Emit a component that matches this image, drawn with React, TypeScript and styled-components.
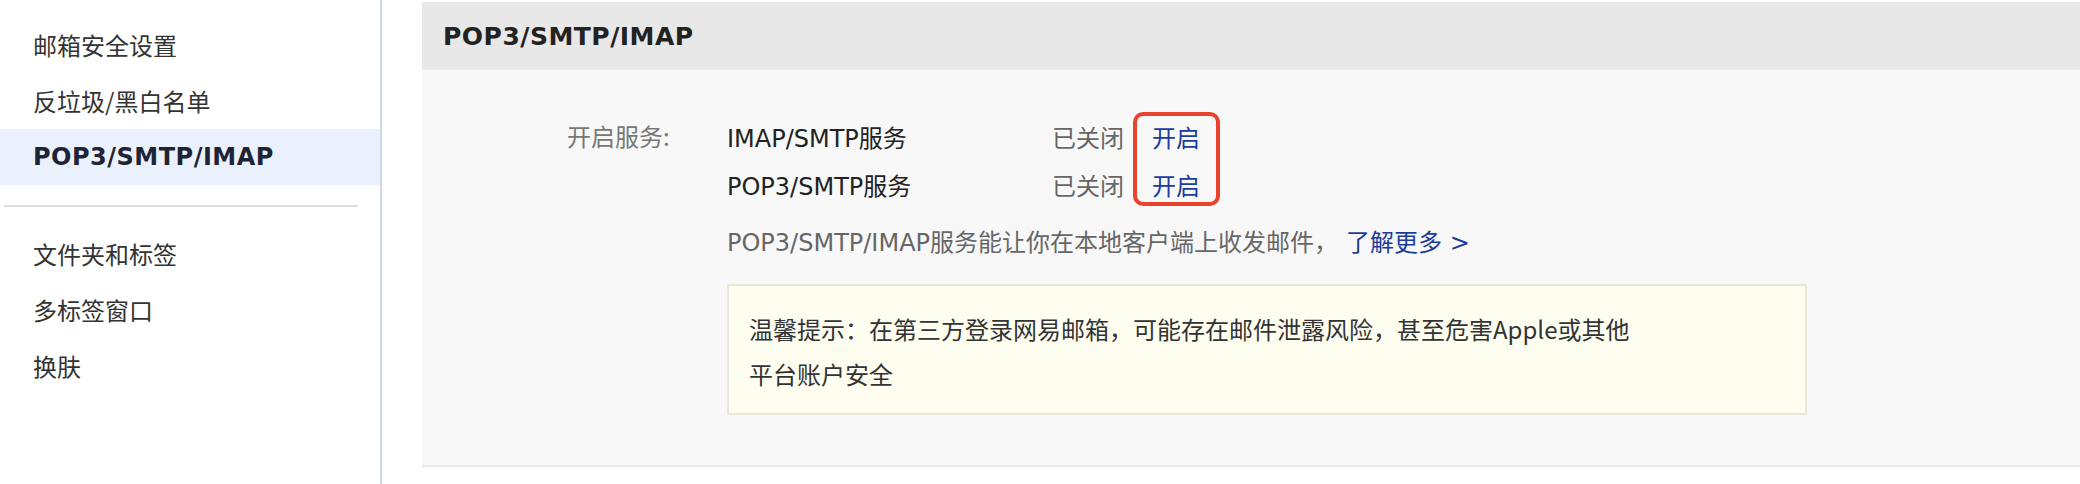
import React from "react";
import styled, { createGlobalStyle } from "styled-components";

const GlobalStyle = createGlobalStyle`
  html, body {
    margin: 0;
    padding: 0;
    background: #ffffff;
  }
  body {
    font-family: "DejaVu Sans", "Noto Sans CJK SC", sans-serif;
    font-size: 24px;
    color: #333333;
  }
`;

const Page = styled.div`
  display: flex;
  min-height: 484px;
`;

const Sidebar = styled.nav`
  width: 380px;
  flex: 0 0 380px;
  border-right: 2px solid #cbd7f3;
  padding-top: 17px;
  box-sizing: content-box;
`;

const NavItem = styled.div<{ $active?: boolean }>`
  height: 56px;
  line-height: 56px;
  padding-left: 33px;
  font-size: 24px;
  font-family: ${(p) =>
    p.$active
      ? `"DejaVu Sans", "Noto Sans CJK SC", sans-serif`
      : `"Noto Sans CJK SC", sans-serif`};
  font-weight: ${(p) => (p.$active ? 700 : 400)};
  letter-spacing: ${(p) => (p.$active ? "0.5px" : "0")};
  color: ${(p) => (p.$active ? "#1e2434" : "#333333")};
  background: ${(p) => (p.$active ? "#eaf1fd" : "transparent")};
  cursor: pointer;
`;

const NavDivider = styled.hr`
  margin: 20px 22px 19px 4px;
  border: 0;
  height: 2px;
  background: #dedede;
`;

const Main = styled.main`
  flex: 1;
  padding: 2px 0 0 40px;
`;

const Panel = styled.section`
  background: #f8f8f8;
  border-bottom: 2px solid #e8e8e8;
`;

const PanelHeader = styled.header`
  height: 68px;
  display: flex;
  align-items: center;
  padding-left: 21px;
  background: #e8e8e8;
`;

const PanelTitle = styled.h2`
  margin: 0;
  font-family: "DejaVu Sans", sans-serif;
  font-size: 25px;
  font-weight: 700;
  letter-spacing: 0.5px;
  color: #222222;
`;

const PanelBody = styled.div`
  display: grid;
  grid-template-columns: 305px 1fr;
  padding: 42px 0 50px;
`;

const FieldLabel = styled.div`
  padding-left: 145px;
  line-height: 42px;
  margin-top: 3px;
  color: #777777;
  font-family: "Noto Sans CJK SC", sans-serif;
`;

const FieldContent = styled.div`
  display: flex;
  flex-direction: column;
  align-items: flex-start;
`;

const ServiceList = styled.div`
  position: relative;
  display: grid;
  grid-template-columns: 325px 100px auto;
  grid-auto-rows: 48px;
  align-items: center;
`;

const ServiceName = styled.span`
  color: #222222;
`;

const ServiceStatus = styled.span`
  color: #666666;
  font-family: "Noto Sans CJK SC", sans-serif;
`;

const Link = styled.a`
  color: #1c3c9c;
  text-decoration: none;
  font-family: "Noto Sans CJK SC", sans-serif;
  cursor: pointer;
`;

const Highlight = styled.div`
  position: absolute;
  left: 406px;
  top: 0;
  width: 87px;
  height: 94px;
  box-sizing: border-box;
  border: 4px solid #e8432c;
  border-radius: 10px;
  pointer-events: none;
`;

const Description = styled.p`
  margin: 11px 0 0;
  line-height: 48px;
  color: #666666;
`;

const MoreLink = styled(Link)`
  margin-left: 8px;
  font-family: "DejaVu Sans", "Noto Sans CJK SC", sans-serif;
`;

const Notice = styled.div`
  margin-top: 17px;
  width: 1080px;
  box-sizing: border-box;
  padding: 20px 20px 17px;
  border: 2px solid #e8e8d2;
  background: #fdfdf0;
  font-family: "Noto Sans CJK SC", sans-serif;
  line-height: 45px;
  color: #333333;
`;

const topNav = ["邮箱安全设置", "反垃圾/黑白名单", "POP3/SMTP/IMAP"];
const bottomNav = ["文件夹和标签", "多标签窗口", "换肤"];

const services = [
  { name: "IMAP/SMTP服务", status: "已关闭" },
  { name: "POP3/SMTP服务", status: "已关闭" },
];

export default function App() {
  return (
    <>
      <GlobalStyle />
      <Page>
        <Sidebar>
          {topNav.map((item) => (
            <NavItem key={item} $active={item === "POP3/SMTP/IMAP"}>
              {item}
            </NavItem>
          ))}
          <NavDivider />
          {bottomNav.map((item) => (
            <NavItem key={item}>{item}</NavItem>
          ))}
        </Sidebar>
        <Main>
          <Panel>
            <PanelHeader>
              <PanelTitle>POP3/SMTP/IMAP</PanelTitle>
            </PanelHeader>
            <PanelBody>
              <FieldLabel>开启服务:</FieldLabel>
              <FieldContent>
                <ServiceList>
                  {services.map((s) => (
                    <React.Fragment key={s.name}>
                      <ServiceName>{s.name}</ServiceName>
                      <ServiceStatus>{s.status}</ServiceStatus>
                      <Link>开启</Link>
                    </React.Fragment>
                  ))}
                  <Highlight />
                </ServiceList>
                <Description>
                  POP3/SMTP/IMAP服务能让你在本地客户端上收发邮件，
                  <MoreLink>了解更多 &gt;</MoreLink>
                </Description>
                <Notice>
                  温馨提示：在第三方登录网易邮箱，可能存在邮件泄露风险，甚至危害Apple或其他
                  <br />
                  平台账户安全
                </Notice>
              </FieldContent>
            </PanelBody>
          </Panel>
        </Main>
      </Page>
    </>
  );
}
